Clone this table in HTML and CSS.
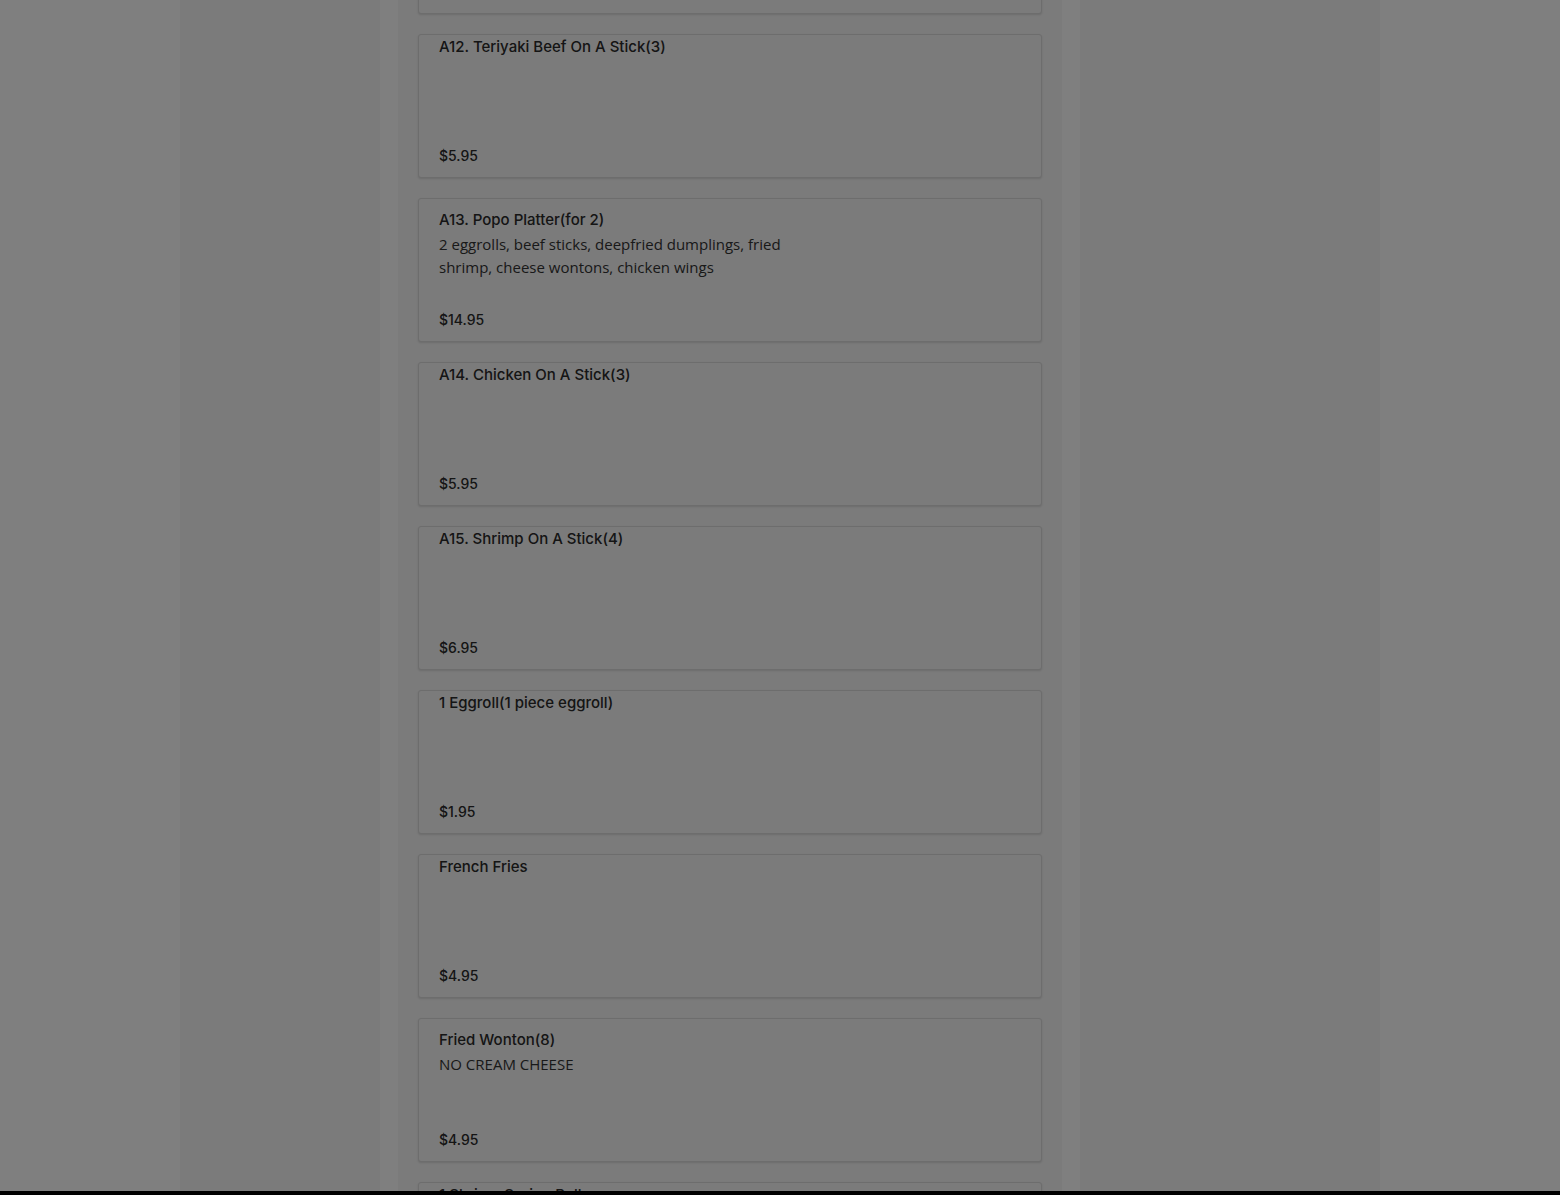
FILE: index.html
```html
<!DOCTYPE html>
<html lang="en">
<head>
    <meta charset="UTF-8">
    <meta name="viewport" content="width=device-width, initial-scale=1.0">
    <title>Menu - Appetizers</title>
    <link rel="stylesheet" href="styles.css">
</head>
<body>
    <div class="page">
        <aside class="side-left"></aside>

        <main class="menu">
            <div class="item">
                <div class="item-name">A11. Crab Rangoon(6)</div>
                <div class="item-price">$5.95</div>
            </div>
            <div class="item">
                <div class="item-name">A12. Teriyaki Beef On A Stick(3)</div>
                <div class="item-price">$5.95</div>
            </div>
            <div class="item has-desc">
                <div class="item-name">A13. Popo Platter(for 2)</div>
                <p class="item-desc">2 eggrolls, beef sticks, deepfried dumplings, fried shrimp, cheese wontons, chicken wings</p>
                <div class="item-price">$14.95</div>
            </div>
            <div class="item">
                <div class="item-name">A14. Chicken On A Stick(3)</div>
                <div class="item-price">$5.95</div>
            </div>
            <div class="item">
                <div class="item-name">A15. Shrimp On A Stick(4)</div>
                <div class="item-price">$6.95</div>
            </div>
            <div class="item">
                <div class="item-name">1 Eggroll(1 piece eggroll)</div>
                <div class="item-price">$1.95</div>
            </div>
            <div class="item">
                <div class="item-name">French Fries</div>
                <div class="item-price">$4.95</div>
            </div>
            <div class="item has-desc">
                <div class="item-name">Fried Wonton(8)</div>
                <p class="item-desc">NO CREAM CHEESE</p>
                <div class="item-price">$4.95</div>
            </div>
            <div class="item">
                <div class="item-name">1 Shrimp Spring Roll</div>
                <div class="item-price">$2.25</div>
            </div>
        </main>

        <aside class="side-right"></aside>
    </div>

    <div class="cart-bar"></div>
    <div class="overlay"></div>
</body>
</html>
```

FILE: styles.css
```css
body {
    margin: 0;
    background-color: #ffffff;
    font-family: "Open Sans", "Liberation Sans", sans-serif;
    color: #333;
    overflow: hidden;
    height: 1195px;
}
.page {
    width: 1200px;
    margin: 0 auto;
    display: grid;
    grid-template-columns: 200px 664px 300px;
    column-gap: 18px;
    min-height: 1400px;
}
.side-left, .side-right {
    background-color: #f6f6f6;
}
.menu {
    background-color: #f6f6f6;
    padding: 0 20px;
    margin-top: -130px; /* page is scrolled down the appetizers list */
    display: flex;
    flex-direction: column;
    gap: 20px;
}
.item {
    height: 144px;
    box-sizing: border-box;
    display: flex;
    flex-direction: column;
    padding: 2px 20px 11px;
    border: 1px solid #dadada;
    border-radius: 3px;
    box-shadow: 0 1px 2px rgba(0, 0, 0, 0.12);
    background-color: #f6f6f6;
}
.item.has-desc {
    padding-top: 11px;
}
.item-name, .item-price {
    font-family: Inter, "Noto Sans", sans-serif;
    font-weight: 500;
    font-size: 15px;
    line-height: 20px;
    color: #2a2a2a;
}
.item-desc {
    margin: 3px 0 0;
    max-width: 360px;
    font-size: 15px;
    line-height: 23px;
    color: #333;
}
.item-price {
    margin-top: auto;
    font-size: 14px;
}
.cart-bar {
    position: fixed;
    left: 0;
    right: 0;
    bottom: 0;
    height: 4px;
    background-color: #000;
}
.overlay {
    position: fixed;
    inset: 0;
    background-color: rgba(0, 0, 0, 0.5);
}
```
